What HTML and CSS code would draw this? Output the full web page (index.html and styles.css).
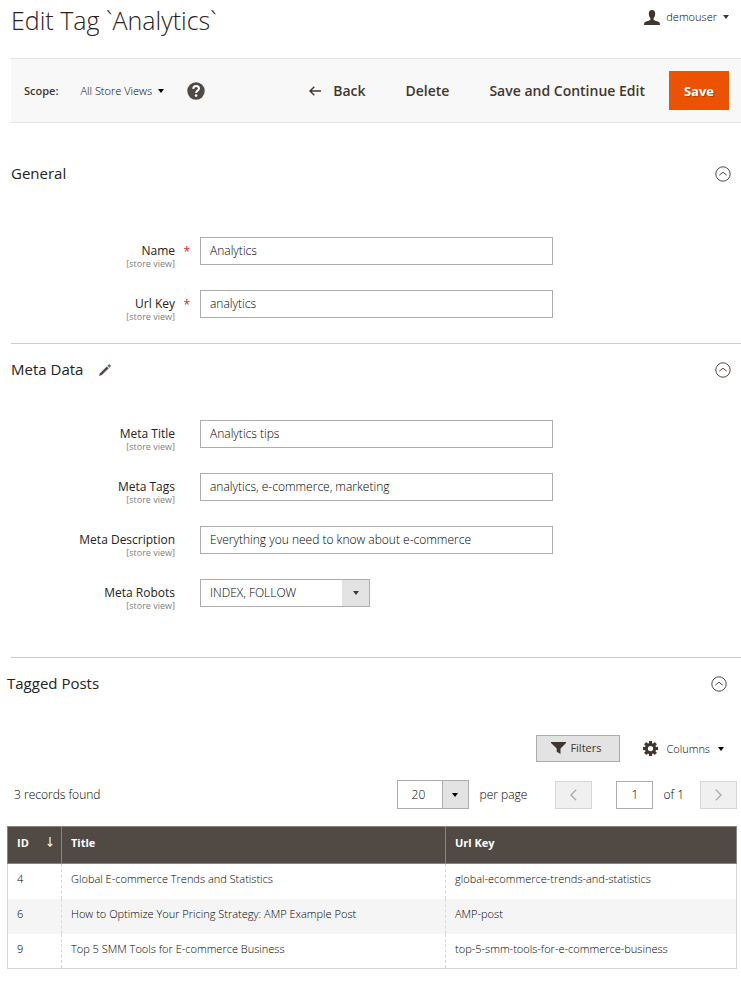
FILE: index.html
```html
<!DOCTYPE html>
<html lang="en">
<head>
    <meta charset="UTF-8">
    <meta name="viewport" content="width=device-width, initial-scale=1.0">
    <title>Edit Tag `Analytics`</title>
    <link rel="stylesheet" href="styles.css">
</head>
<body>
    <header class="page-header">
        <h1 class="page-title">Edit Tag `Analytics`</h1>
        <button type="button" class="user-menu">
            <svg class="icon-user" viewBox="0 0 16 15" width="16" height="15"><path d="M8 0C5.800 0 4.700 1.500 4.800 3.800C4.900 6 5.600 7.400 6.400 8.200V9.800C6.200 10.600 1.500 11.300 .6 12.600C.1 13.300 0 14 0 15H16C16 14 15.900 13.300 15.400 12.600C14.500 11.300 9.800 10.600 9.600 9.800V8.200C10.400 7.400 11.100 6 11.200 3.800C11.300 1.500 10.200 0 8 0Z" fill="#41362f"/></svg>
            <span>demouser</span>
            <span class="caret"></span>
        </button>
    </header>

    <div class="toolbar">
        <div class="scope">
            <span class="scope-label">Scope:</span>
            <button type="button" class="scope-switch">All Store Views <span class="caret caret-black"></span></button>
            <a href="#" class="help" aria-label="Help">
                <svg viewBox="0 0 18 18" width="18" height="18"><circle cx="9" cy="9" r="8.700" fill="#514943"/><path d="M6.200 6.900C6.300 4.900 7.400 4 9.100 4C10.800 4 12 5 12 6.500C12 8.600 9.100 8.700 9.100 10.900" fill="none" stroke="#fff" stroke-width="2"/><circle cx="9.100" cy="13.600" r="1.300" fill="#fff"/></svg>
            </a>
        </div>
        <div class="actions">
            <button type="button" class="action action-back">
                <svg viewBox="0 0 12 10" width="12" height="10"><path d="M12 5H1M5.300 .7L1 5L5.300 9.300" fill="none" stroke="#41362f" stroke-width="1.400"/></svg>
                Back
            </button>
            <button type="button" class="action">Delete</button>
            <button type="button" class="action">Save and Continue Edit</button>
            <button type="button" class="action action-primary">Save</button>
        </div>
    </div>

    <form class="tag-form">
        <section class="section section-general">
            <div class="section-header">
                <h2>General</h2>
                <button type="button" class="collapse" aria-label="Collapse General">
                    <svg viewBox="0 0 16 16" width="16" height="16"><circle cx="8" cy="8" r="7.200"/><path d="M4.300 9.200L8 6.200L11.700 9.200"/></svg>
                </button>
            </div>
            <div class="fields">
                <div class="field required">
                    <label for="name">Name <small>[store view]</small></label>
                    <input type="text" id="name" value="Analytics">
                </div>
                <div class="field required">
                    <label for="url-key">Url Key <small>[store view]</small></label>
                    <input type="text" id="url-key" value="analytics">
                </div>
            </div>
        </section>

        <section class="section section-meta">
            <div class="section-header">
                <h2>Meta Data</h2>
                <svg class="icon-pencil" viewBox="0 0 12 12" width="12" height="12"><path d="M0 12L1 9.200L7.800 2.400L9.700 4.300L2.900 11.100Z" fill="#514943"/><path d="M8.400 1.800L9.800 .4Q10.300 0 10.800 .4L11.600 1.200Q12 1.700 11.600 2.200L10.300 3.700Z" fill="#41699b"/></svg>
                <button type="button" class="collapse" aria-label="Collapse Meta Data">
                    <svg viewBox="0 0 16 16" width="16" height="16"><circle cx="8" cy="8" r="7.200"/><path d="M4.300 9.200L8 6.200L11.700 9.200"/></svg>
                </button>
            </div>
            <div class="fields">
                <div class="field">
                    <label for="meta-title">Meta Title <small>[store view]</small></label>
                    <input type="text" id="meta-title" value="Analytics tips">
                </div>
                <div class="field">
                    <label for="meta-tags">Meta Tags <small>[store view]</small></label>
                    <input type="text" id="meta-tags" value="analytics, e-commerce, marketing">
                </div>
                <div class="field">
                    <label for="meta-description">Meta Description <small>[store view]</small></label>
                    <input type="text" id="meta-description" value="Everything you need to know about e-commerce">
                </div>
                <div class="field">
                    <label for="meta-robots">Meta Robots <small>[store view]</small></label>
                    <div class="select-wrap">
                        <select id="meta-robots">
                            <option>INDEX, FOLLOW</option>
                        </select>
                        <span class="select-arrow"><span class="caret"></span></span>
                    </div>
                </div>
            </div>
        </section>

        <section class="section section-posts">
            <div class="section-header">
                <h2>Tagged Posts</h2>
                <button type="button" class="collapse" aria-label="Collapse Tagged Posts">
                    <svg viewBox="0 0 16 16" width="16" height="16"><circle cx="8" cy="8" r="7.200"/><path d="M4.300 9.200L8 6.200L11.700 9.200"/></svg>
                </button>
            </div>

            <div class="grid-tools">
                <button type="button" class="filters">
                    <svg viewBox="0 0 15 12" width="15" height="12"><path d="M0 0H15V1L9.500 6.500V12L5.700 9.700V6.500L0 1Z" fill="#41362f"/></svg>
                    Filters
                </button>
                <button type="button" class="columns">
                    <svg viewBox="0 0 16 16" width="15" height="15"><g fill="#41362f"><rect x="6.300" y="0" width="3.400" height="16"/><rect x="6.300" y="0" width="3.400" height="16" transform="rotate(45 8 8)"/><rect x="6.300" y="0" width="3.400" height="16" transform="rotate(90 8 8)"/><rect x="6.300" y="0" width="3.400" height="16" transform="rotate(135 8 8)"/><circle cx="8" cy="8" r="6"/></g><circle cx="8" cy="8" r="2.800" fill="#fff"/></svg>
                    Columns
                    <span class="caret caret-black"></span>
                </button>
            </div>

            <div class="pager">
                <span class="records">3 records found</span>
                <div class="select-wrap page-size">
                    <select id="page-size">
                        <option>20</option>
                    </select>
                    <span class="select-arrow"><span class="caret caret-black"></span></span>
                </div>
                <label for="page-size" class="per-page">per page</label>
                <button type="button" class="page-button" aria-label="Previous page" disabled>
                    <svg viewBox="0 0 7 12" width="7" height="12"><path d="M6.200 .8L1 6L6.200 11.200"/></svg>
                </button>
                <input type="text" class="page-number" id="page-number" value="1">
                <label for="page-number" class="page-total">of 1</label>
                <button type="button" class="page-button" aria-label="Next page" disabled>
                    <svg viewBox="0 0 7 12" width="7" height="12"><path d="M.8 .8L6 6L.8 11.200"/></svg>
                </button>
            </div>

            <table class="posts">
                <thead>
                    <tr>
                        <th class="col-id">ID
                            <svg class="sort" viewBox="0 0 6 10" width="6" height="10"><path d="M3 0V9M.7 6.900L3 9.200L5.300 6.900" fill="none" stroke="#ffefc0" stroke-width="1.300"/></svg>
                        </th>
                        <th class="col-title">Title</th>
                        <th>Url Key</th>
                    </tr>
                </thead>
                <tbody>
                    <tr>
                        <td>4</td>
                        <td>Global E-commerce Trends and Statistics</td>
                        <td>global-ecommerce-trends-and-statistics</td>
                    </tr>
                    <tr>
                        <td>6</td>
                        <td>How to Optimize Your Pricing Strategy: AMP Example Post</td>
                        <td>AMP-post</td>
                    </tr>
                    <tr>
                        <td>9</td>
                        <td>Top 5 SMM Tools for E-commerce Business</td>
                        <td>top-5-smm-tools-for-e-commerce-business</td>
                    </tr>
                </tbody>
            </table>
        </section>
    </form>
</body>
</html>
```
FILE: styles.css
```css
* {
    box-sizing: border-box;
    margin: 0;
    padding: 0;
}

body {
    font-family: "Open Sans", "Helvetica Neue", Helvetica, Arial, sans-serif;
    font-size: 12px;
    font-weight: 300;
    line-height: 16px;
    color: #000;
    background: #fff;
    padding-left: 11px;
}

button,
input,
select {
    font: inherit;
    color: inherit;
}

button {
    display: flex;
    align-items: center;
    border: none;
    background: none;
    cursor: pointer;
    white-space: nowrap;
}

svg {
    display: block;
    flex: none;
}

.caret {
    border: 3px solid transparent;
    border-top: 4px solid #41362f;
    border-bottom: none;
}

.caret-black {
    border-top-color: #000;
}

/* Header */
.page-header {
    display: flex;
    justify-content: space-between;
    align-items: flex-start;
    height: 58px;
    padding: 4px 12px 0 0;
}

.page-title {
    font-size: 25px;
    line-height: 32px;
    font-weight: 300;
    color: #2b211b;
}

.user-menu {
    gap: 6px;
    padding-top: 5px;
    font-size: 11px;
}

/* Toolbar */
.toolbar {
    display: flex;
    justify-content: space-between;
    align-items: center;
    height: 65px;
    padding: 0 12px 0 13px;
    background: #f8f8f8;
    border-top: 1px solid #e3e3e3;
    border-bottom: 1px solid #e3e3e3;
}

.scope {
    display: flex;
    align-items: center;
    font-size: 11px;
}

.scope-label {
    font-weight: 600;
    margin-right: 22px;
    color: #41362f;
}

.scope-switch {
    gap: 6px;
    margin-right: 23px;
}

.actions {
    display: flex;
    align-items: center;
}

.action {
    height: 39px;
    margin-right: 40px;
    font-size: 14px;
    font-weight: 600;
    color: #41362f;
}

.action-back {
    gap: 12px;
}

.action-primary {
    justify-content: center;
    width: 60px;
    margin-right: 0;
    margin-left: -16px;
    background: #eb5202;
    color: #fff;
    font-size: 13px;
    font-weight: 700;
    text-shadow: 1px 1px 0 rgba(0, 0, 0, 0.25);
}

/* Form sections */
.section-header {
    display: flex;
    align-items: center;
    height: 52px;
    padding-right: 10px;
}

.section-header h2 {
    padding-bottom: 2px;
    font-size: 15px;
    line-height: 20px;
    font-weight: 500;
    color: #222;
}

.icon-pencil {
    margin-left: 16px;
}

.collapse {
    margin-left: auto;
}

.collapse svg {
    fill: none;
    stroke: #514943;
    stroke-width: 1;
}

.section-general {
    padding-top: 25px;
}

.section-general .fields {
    padding-top: 37px;
}

.section-meta {
    border-top: 1px solid #ccc;
    border-bottom: 1px solid #ccc;
    padding-bottom: 25px;
}

.section-meta .fields {
    padding-top: 24px;
}

.field {
    display: flex;
    margin-bottom: 25px;
}

.field label {
    width: 164px;
    margin-right: 25px;
    padding-top: 6px;
    font-weight: 500;
    text-align: right;
    color: #222;
    position: relative;
    height: 28px;
}

.field label small {
    display: block;
    font-size: 9px;
    line-height: 10px;
    font-weight: 400;
    color: #808080;
}

.required label::after {
    content: "*";
    position: absolute;
    top: 7px;
    right: -15px;
    color: #e22626;
}

.field input,
.select-wrap {
    height: 28px;
    border: 1px solid #adadad;
    background: #fff;
}

.field input {
    flex: 1;
    max-width: 353px;
    padding: 0 9px 2px;
}

.select-wrap {
    display: flex;
    position: relative;
    width: 170px;
}

.select-wrap select {
    flex: 1;
    appearance: none;
    border: none;
    background: none;
    padding: 0 28px 0 9px;
}

.select-arrow {
    display: flex;
    align-items: center;
    justify-content: center;
    position: absolute;
    top: 0;
    right: 0;
    bottom: 0;
    width: 27px;
    background: #e3e3e3;
    pointer-events: none;
}

/* Tagged posts */
.section-posts {
    margin: 0 4px 0 -4px;
}

.grid-tools {
    display: flex;
    justify-content: flex-end;
    align-items: center;
    gap: 23px;
    padding: 25px 13px 0 0;
    font-size: 11px;
}

.filters {
    gap: 4px;
    width: 84px;
    height: 27px;
    padding: 0 0 1px 14px;
    background: #e3e3e3;
    border: 1px solid #adadad;
    font-weight: 500;
    color: #41362f;
}

.columns {
    gap: 8px;
}

.pager {
    display: flex;
    align-items: center;
    padding: 18px 0 17px 7px;
}

.records {
    margin-right: auto;
}

.page-size {
    width: 72px;
    height: 29px;
}

.page-size select {
    padding: 0 28px 0 14px;
}

.page-size .select-arrow {
    width: 26px;
    border-left: 1px solid #adadad;
}

.per-page {
    margin: 0 28px 0 11px;
}

.page-button {
    justify-content: center;
    width: 37px;
    height: 28px;
    background: #f0f0f0;
    border: 1px solid #d6d6d6;
}

.page-button svg {
    fill: none;
    stroke: #adadad;
    stroke-width: 1.4;
}

.page-number {
    width: 37px;
    height: 28px;
    margin: 0 10px 0 24px;
    border: 1px solid #adadad;
    text-align: center;
}

.page-total {
    margin-right: 16px;
}

.posts {
    width: 100%;
    border-collapse: collapse;
    font-size: 11px;
    table-layout: fixed;
}

.posts th {
    height: 37px;
    padding: 0 9px 4px;
    background: #514943;
    border: 1px solid #8a837f;
    color: #fff;
    font-weight: 700;
    text-align: left;
}

.posts td {
    height: 35px;
    padding: 0 9px 4px;
    border-left: 1px dashed #d6d6d6;
}

.posts td:first-child {
    border-left: 1px solid #d6d6d6;
}

.posts td:last-child {
    border-right: 1px solid #d6d6d6;
}

.posts tbody tr:nth-child(even) {
    background: #f5f5f5;
}

.posts tbody tr:last-child {
    border-bottom: 1px solid #d6d6d6;
}

.col-id {
    width: 54px;
}

.col-title {
    width: 384px;
}

.sort {
    float: right;
    margin: 2px -1px 0 0;
}
```
